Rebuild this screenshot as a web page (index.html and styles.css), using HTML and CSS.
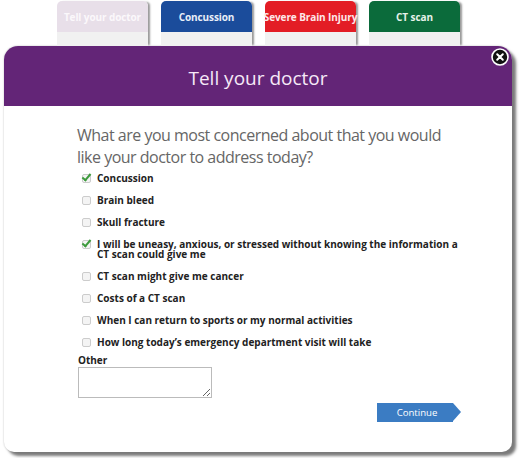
FILE: index.html
```html
<!DOCTYPE html>
<html>
<head>
<meta charset="utf-8">
<link rel="stylesheet" href="styles.css">
</head>
<body>
<div class="page">
  <nav class="tabs">
    <div class="tab tab-tell"><span class="tab-head">Tell your doctor</span><span class="tab-foot"></span></div>
    <div class="tab tab-conc"><span class="tab-head">Concussion</span><span class="tab-foot"></span></div>
    <div class="tab tab-sev"><span class="tab-head">Severe Brain Injury</span><span class="tab-foot"></span></div>
    <div class="tab tab-ct"><span class="tab-head">CT scan</span><span class="tab-foot"></span></div>
  </nav>
  <div class="modal">
    <header class="modal-head">
      <h1>Tell your doctor</h1>
      <button class="close" aria-label="close">
        <svg width="18" height="18" viewBox="0 0 18 18"><circle cx="9" cy="9" r="8" fill="#111" stroke="#fff" stroke-width="1.6"/><path d="M6.2 6.2 L11.8 11.8 M11.8 6.2 L6.2 11.8" stroke="#fff" stroke-width="2" stroke-linecap="round"/></svg>
      </button>
    </header>
    <div class="modal-body">
      <p class="question">What are you most concerned about that you would like your doctor to address today?</p>
      <ul class="options">
        <li class="checked"><span class="box"></span><span>Concussion</span></li>
        <li><span class="box"></span><span>Brain bleed</span></li>
        <li><span class="box"></span><span>Skull fracture</span></li>
        <li class="checked"><span class="box"></span><span>I will be uneasy, anxious, or stressed without knowing the information a CT scan could give me</span></li>
        <li><span class="box"></span><span>CT scan might give me cancer</span></li>
        <li><span class="box"></span><span>Costs of a CT scan</span></li>
        <li><span class="box"></span><span>When I can return to sports or my normal activities</span></li>
        <li><span class="box"></span><span>How long today’s emergency department visit will take</span></li>
      </ul>
      <label class="other-label">Other</label>
      <textarea class="other"></textarea>
      <div class="actions">
        <button class="continue">Continue</button>
      </div>
    </div>
  </div>
</div>
</body>
</html>
```

FILE: styles.css
```css
* { box-sizing: border-box; }
html, body { margin: 0; padding: 0; background: #fff; }
body { width: 521px; height: 458px; overflow: hidden; font-family: "Open Sans", "DejaVu Sans", sans-serif; }
.page { padding: 1px 0 0 4px; }
.tabs { display: flex; gap: 13px; padding-left: 53px; height: 45px; }
.tab { width: 91px; display: flex; flex-direction: column; box-shadow: 3px 0 2px -1px #999; border-radius: 5px 5px 0 0; }
.tab-head { height: 31px; display: flex; align-items: center; justify-content: center; color: #fff; font-weight: bold; font-size: 10px; border-radius: 5px 5px 0 0; white-space: nowrap; letter-spacing: -0.1px; }
.tab-foot { flex: 1; background: #f1f1f1; }
.tab-tell .tab-head { background: #e8dfe9; color: #fbf8fb; }
.tab-conc .tab-head { background: #1b4c9b; color: #e8eef8; }
.tab-sev .tab-head { background: #e31d25; color: #fde9ea; }
.tab-ct .tab-head { background: #0b6b3b; color: #e6f2ea; }
.modal { width: 508px; height: 406px; border-radius: 14px 14px 10px 10px; background: #fff; box-shadow: 4px 4px 3px #7a7a7a, 0 0 2px #bbb; overflow: hidden; display: flex; flex-direction: column; }
.modal-head { position: relative; background: #632577; height: 60px; display: flex; align-items: center; justify-content: center; padding-top: 3px; }
.modal-head h1 { margin: 0; font-weight: normal; font-size: 19px; color: #f6e9f7; font-family: "Open Sans", sans-serif; }
.close { position: absolute; right: 3px; top: 2px; padding: 0; border: 0; background: none; width: 18px; height: 18px; }
.close svg { display: block; }
.modal-body { padding: 18px 0 0 73px; }
.question { margin: 0 0 -1px; font-family: "Open Sans", sans-serif; font-size: 16px; letter-spacing: -0.5px; line-height: 22px; color: #666; width: 380px; }
.options { list-style: none; margin: 0; padding: 0 0 0 5px; }
.options li { display: flex; align-items: flex-start; gap: 6px; font-size: 10px; font-weight: bold; color: #222; line-height: 10px; padding: 6px 0 6px; }
.options li .box { flex: none; width: 9px; height: 9px; margin-top: 1px; border: 1px solid #ccc; border-radius: 2px; background: #f4f4f4; position: relative; }
.options li.checked .box::after { content: ""; position: absolute; left: 1px; top: -3px; width: 3px; height: 7px; border: solid #3c9a3c; border-width: 0 2.5px 2.5px 0; transform: rotate(40deg); }
.options li span:last-child { width: 370px; }
.other-label { display: block; margin: 1px 0 0 1px; font-size: 10px; line-height: 12px; font-weight: bold; color: #222; }
.other { display: block; margin: 1px 0 0 1px; width: 134px; height: 31px; border: 1px solid #bbb; resize: both; }
.actions { display: flex; justify-content: flex-end; padding-right: 51px; margin-top: 5px; }
.continue { position: relative; width: 76px; height: 19px; background: #3b7cc3; border: 0; color: #fff; font-size: 9.6px; font-family: "Open Sans", sans-serif; padding: 0 0 0 4px; margin-right: 8px; }
.continue::after { content: ""; position: absolute; right: -8px; top: 0; border-style: solid; border-width: 9.5px 0 9.5px 8px; border-color: transparent transparent transparent #3b7cc3; }
```
